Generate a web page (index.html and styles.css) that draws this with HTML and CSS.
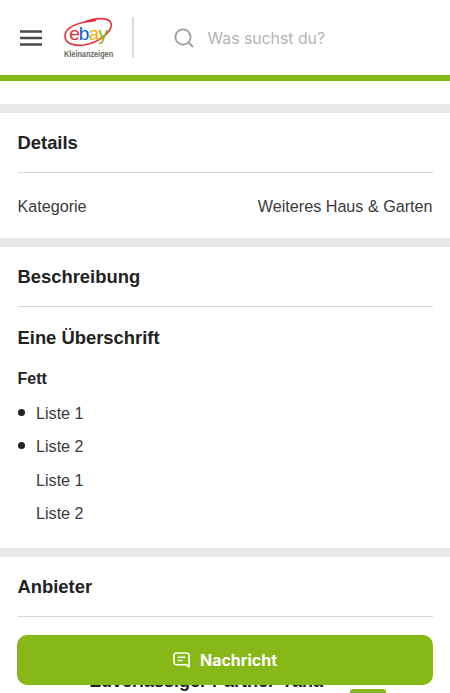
FILE: index.html
```html
<!DOCTYPE html>
<html lang="de">
<head>
<meta charset="utf-8">
<title>Kleinanzeigen</title>
<link rel="stylesheet" href="styles.css">
</head>
<body>
<header class="header">
  <svg class="menu" width="22" height="16" viewBox="0 0 22 16"><path d="M0 1.500h22M0 8h22M0 14.500h22" stroke="#4a4a4a" stroke-width="2.400" fill="none"/></svg>
  <div class="logo">
    <div class="logo-mark">
      <svg class="swoosh" width="49" height="30" viewBox="0 0 49 30"><path d="M19 5.500C31 0.500 45 0 47 6C49.500 14 35 25.500 20 28C8 29.500 1 25.500 1 19C1 11 12 5.500 32 3.500" fill="none" stroke="#e53238" stroke-width="1.600"/></svg>
      <span class="ebay"><span class="e">e</span><span class="b">b</span><span class="a">a</span><span class="y">y</span></span>
    </div>
    <div class="logo-sub">Kleinanzeigen</div>
  </div>
  <div class="divider"></div>
  <svg class="search" width="20" height="20" viewBox="0 0 20 20"><circle cx="9" cy="9" r="7.600" fill="none" stroke="#9e9e9e" stroke-width="1.800"/><path d="M14.500 14.500L19 19" stroke="#9e9e9e" stroke-width="2"/></svg>
  <span class="placeholder">Was suchst du?</span>
</header>
<main>
  <section class="card">
    <h2 class="title">Details</h2>
    <div class="row"><span>Kategorie</span><span>Weiteres Haus &amp; Garten</span></div>
  </section>
  <section class="card">
    <h2 class="title">Beschreibung</h2>
    <div class="desc">
      <h3 class="sub">Eine Überschrift</h3>
      <p class="bold">Fett</p>
      <ul class="list">
        <li>Liste 1</li>
        <li>Liste 2</li>
      </ul>
      <p class="plain">Liste 1</p>
      <p class="plain">Liste 2</p>
    </div>
  </section>
  <section class="card">
    <h2 class="title">Anbieter</h2>
    <div class="seller">
      <span class="seller-name">Zuverlässiger Partner-Yana</span>
      <span class="badge"></span>
    </div>
  </section>
</main>
<button class="cta" type="button">
  <svg width="17" height="16" viewBox="0 0 18 17"><path d="M3.500 1h11A2.500 2.500 0 0 1 17 3.500V16l-3-2.500H3.500A2.500 2.500 0 0 1 1 11V3.500A2.500 2.500 0 0 1 3.500 1Z" fill="none" stroke="#fff" stroke-width="1.700" stroke-linejoin="round"/><path d="M5 5.500h8M5 9h5" stroke="#fff" stroke-width="1.700"/></svg>
  <span>Nachricht</span>
</button>
</body>
</html>
```
FILE: styles.css
```css
* { box-sizing: border-box; }
html, body { margin: 0; height: 693px; overflow: hidden; background: #fff; }
body { font-family: "Liberation Sans", Arial, sans-serif; color: #222; position: relative; }

.header {
  height: 81px;
  border-bottom: 6px solid #86b817;
  display: flex;
  align-items: center;
  padding-left: 20px;
}
.menu { flex: none; margin-right: 22px; }
.logo { width: 50px; flex: none; display: flex; flex-direction: column; align-items: center; }
.logo-mark { position: relative; width: 50px; height: 31px; display: flex; align-items: center; justify-content: center; }
.swoosh { position: absolute; left: 0; top: 0; }
.ebay { font-size: 19px; letter-spacing: -.9px; line-height: 1; position: relative; left: -1px; top: 1px; }
.e { color: #e53238; }
.b { color: #0064d2; }
.a { color: #f5af02; }
.y { color: #86b817; }
.logo-sub { font-size: 8.500px; font-weight: 700; color: #6b6660; white-space: nowrap; transform: scaleX(.86); line-height: 10px; margin-top: 1px; }
.divider { width: 1.500px; height: 41px; background: #dcdcdc; margin-left: 18px; margin-right: 40px; flex: none; }
.search { flex: none; margin-right: 14px; }
.placeholder { font-family: Inter, sans-serif; font-size: 15.800px; color: #b4b4b4; padding-top: 1px; }

main { padding-top: 23px; }
.card { border-top: 9px solid #e8e8e8; padding: 0 17.500px; }
.title {
  margin: 0;
  font-size: 18.400px;
  font-weight: 700;
  line-height: 21px;
  padding: 19px 0 19px;
  border-bottom: 1px solid #d6d6d6;
}
.row {
  display: flex;
  justify-content: space-between;
  font-size: 16.150px;
  line-height: 20px;
  color: #3a3a3a;
  padding: 23px 0 22px;
}
.desc { padding-bottom: 24.500px; }
.sub { margin: 0; font-size: 18.400px; line-height: 21px; padding-top: 20px; }
.bold { margin: 0; font-size: 16px; font-weight: 700; line-height: 20px; padding-top: 21px; }
.list { list-style: none; margin: 0; padding: 0; }
.list li { position: relative; padding-left: 18.500px; }
.list li::before { content: ""; position: absolute; left: 0; top: 19.500px; width: 7px; height: 7px; border-radius: 50%; background: #222; }
.list li, .plain { font-size: 16.150px; line-height: 20px; color: #3a3a3a; margin: 0; padding-top: 13.500px; }
.plain { padding-left: 18.500px; }

.seller { position: relative; height: 80px; padding: 54px 0 0 72.500px; font-size: 18px; font-weight: 700; line-height: 21px; white-space: nowrap; }
.badge { position: absolute; left: 332.500px; top: 72px; width: 36px; height: 10px; background: #86b817; border-radius: 3px; }

.cta {
  position: absolute;
  left: 17px;
  top: 635px;
  width: 416px;
  height: 50px;
  border: 0;
  border-radius: 10px;
  background: #86b817;
  color: #fff;
  font-family: Inter, sans-serif;
  font-size: 16px;
  font-weight: 700;
  display: flex;
  align-items: center;
  justify-content: center;
  gap: 10px;
  padding: 0;
}
```
